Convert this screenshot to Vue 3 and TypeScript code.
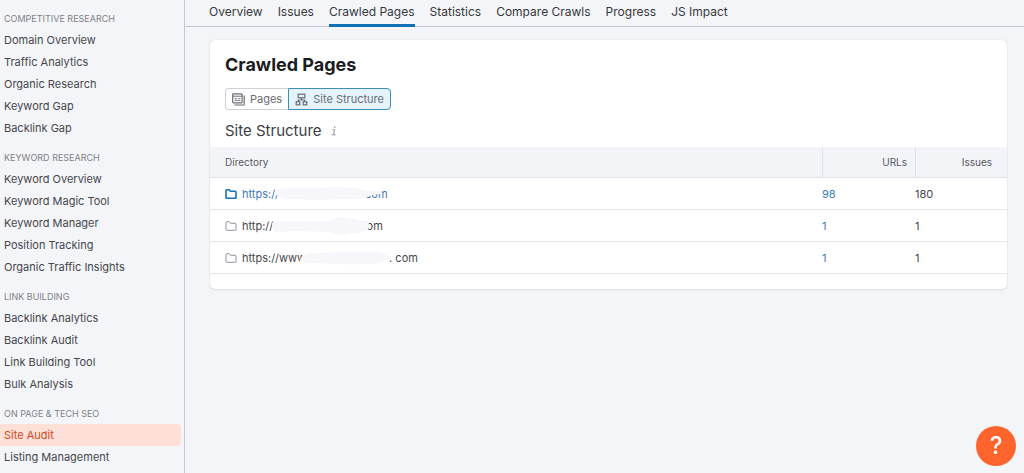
<script setup lang="ts">
interface NavGroup {
  title: string
  items: string[]
}

interface DirectoryRow {
  head: string
  tail: string
  mask: string
  urls: number
  issues: number
  active: boolean
}

const groups: NavGroup[] = [
  {
    title: 'Competitive research',
    items: ['Domain Overview', 'Traffic Analytics', 'Organic Research', 'Keyword Gap', 'Backlink Gap'],
  },
  {
    title: 'Keyword research',
    items: ['Keyword Overview', 'Keyword Magic Tool', 'Keyword Manager', 'Position Tracking', 'Organic Traffic Insights'],
  },
  {
    title: 'Link building',
    items: ['Backlink Analytics', 'Backlink Audit', 'Link Building Tool', 'Bulk Analysis'],
  },
  {
    title: 'On page & tech SEO',
    items: ['Site Audit', 'Listing Management'],
  },
]
const currentTool = 'Site Audit'

const tabs: string[] = ['Overview', 'Issues', 'Crawled Pages', 'Statistics', 'Compare Crawls', 'Progress', 'JS Impact']
const currentTab = 'Crawled Pages'

const rows: DirectoryRow[] = [
  { head: 'https://', tail: 'com', mask: 'short', urls: 98, issues: 180, active: true },
  { head: 'http://', tail: 'com', mask: 'wavy', urls: 1, issues: 1, active: false },
  { head: 'https://www', tail: '. com', mask: 'long', urls: 1, issues: 1, active: false },
]
</script>

<template>
  <div class="app">
    <nav class="sidebar" aria-label="Tools">
      <section v-for="group in groups" :key="group.title" class="group">
        <h2 class="group-title">{{ group.title }}</h2>
        <a
          v-for="item in group.items"
          :key="item"
          href="#"
          class="nav-item"
          :class="{ current: item === currentTool }"
        >{{ item }}</a>
      </section>
    </nav>

    <main class="main">
      <nav class="tabs" aria-label="Site Audit sections">
        <a v-for="tab in tabs" :key="tab" href="#" class="tab" :class="{ current: tab === currentTab }">{{ tab }}</a>
      </nav>

      <section class="card">
        <h1 class="title">Crawled Pages</h1>
        <div class="switch">
          <button type="button" class="pill">
            <svg class="pill-icon" viewBox="0 0 13 13" fill="none" stroke="currentColor" aria-hidden="true">
              <rect x="0.7" y="0.8" width="9.4" height="9" rx="0.8" stroke-width="1.2" />
              <path d="M1 3.2H10" stroke-width="1" />
              <path d="M2.6 5.6H5M6.2 5.6H8.4M2.6 7.4H8.4" stroke-width="0.9" />
              <path d="M12.2 2.4V11.2Q12.2 12 11.4 12H2.4" stroke-width="1.2" />
            </svg>
            <span>Pages</span>
          </button>
          <button type="button" class="pill selected">
            <svg class="pill-icon" viewBox="0 0 13 13" fill="none" stroke="currentColor" stroke-width="1.2" aria-hidden="true">
              <rect x="3.2" y="1.2" width="6.6" height="3.6" />
              <path d="M6.5 4.8V7M3.2 8.8V7H9.8V8.8" />
              <rect x="1.2" y="8.8" width="3.6" height="3" />
              <rect x="8.2" y="8.8" width="3.6" height="3" />
            </svg>
            <span>Site Structure</span>
          </button>
        </div>
        <div class="subhead">
          <h2 class="subtitle">Site Structure</h2>
          <svg class="info" viewBox="0 0 6 10" fill="none" stroke="currentColor" aria-label="Info">
            <path d="M1.4 3.8H3.6L2.6 8.6M0.8 8.8H4.6" stroke-width="1" />
            <circle cx="3.8" cy="1.3" r="0.8" fill="currentColor" stroke="none" />
          </svg>
        </div>

        <table class="table">
          <thead>
            <tr>
              <th scope="col">Directory</th>
              <th scope="col" class="col-num col-urls">URLs</th>
              <th scope="col" class="col-num">Issues</th>
            </tr>
          </thead>
          <tbody>
            <tr v-for="row in rows" :key="row.mask">
              <td>
                <a href="#" class="dir" :class="{ active: row.active }">
                  <svg class="folder" viewBox="0 0 12 12" fill="none" stroke="currentColor" aria-hidden="true">
                    <path
                      d="M1 2.4Q1 1.7 1.7 1.7H4.2L5.6 3.3H10.3Q11 3.3 11 4V9.6Q11 10.3 10.3 10.3H1.7Q1 10.3 1 9.6Z"
                      :stroke-width="row.active ? 1.6 : 1"
                    />
                  </svg>
                  <span>{{ row.head }}</span>
                  <svg v-if="row.mask === 'short'" class="mask short" viewBox="0 0 106 16" aria-hidden="true">
                    <path d="M0 3L10 2Q24 1 40 2Q60 0 80 2L90 5L106 5V8Q94 8 90 12Q74 14 60 13Q40 15 22 13Q8 14 5 11L0 9Z" />
                  </svg>
                  <svg v-else-if="row.mask === 'wavy'" class="mask wavy" viewBox="0 0 98 20" aria-hidden="true">
                    <path d="M0 7Q10 4 22 5L58 5Q66 -1 78 2Q88 5 96 5Q98 9 96 14Q90 17 80 17Q68 21 58 16L22 15Q6 17 1 15Z" />
                  </svg>
                  <svg v-else class="mask long" viewBox="0 0 94 16" aria-hidden="true">
                    <path d="M3 6Q10 2 20 3Q46 1 78 2Q88 4 90 8Q86 13 74 14Q40 15 18 13Q4 14 0 12Z" />
                  </svg>
                  <span>{{ row.tail }}</span>
                </a>
              </td>
              <td class="num"><a href="#" class="count">{{ row.urls }}</a></td>
              <td class="num">{{ row.issues }}</td>
            </tr>
          </tbody>
        </table>
      </section>
    </main>

    <button type="button" class="help" aria-label="Help">?</button>
  </div>
</template>

<style>
body {
  margin: 0;
  background: #f4f5f9;
}
</style>

<style scoped>
.app {
  display: flex;
  min-height: 100vh;
  background: #f4f5f9;
  color: #45474b;
  font-family: Inter, "Liberation Sans", sans-serif;
  font-size: 11px;
}

a {
  color: inherit;
  text-decoration: none;
}

h1,
h2 {
  margin: 0;
}

.sidebar {
  box-sizing: border-box;
  flex: 0 0 185px;
  padding: 8px 3px 0 0;
  border-right: 1px solid #c6c9d0;
}

.group {
  display: flex;
  flex-direction: column;
  margin-bottom: 8px;
}

.group:last-child {
  margin-bottom: 0;
}

.group-title {
  padding-left: 4px;
  color: #7f8187;
  font-size: 9px;
  font-weight: 400;
  line-height: 21px;
  text-transform: uppercase;
}

.nav-item {
  padding-left: 4px;
  border-radius: 0 4px 4px 0;
  line-height: 22px;
}

.nav-item.current {
  background: #ffe0d9;
  color: #cf4a22;
}

.main {
  flex: 1;
  min-width: 0;
}

.tabs {
  display: flex;
  gap: 15px;
  height: 26px;
  padding-left: 24px;
  border-bottom: 1px solid #c6c9d0;
  color: #36383c;
  font-size: 12px;
  line-height: 23px;
}

.tab {
  white-space: nowrap;
}

.tab.current {
  height: 24px;
  border-bottom: 3px solid #1271b5;
}

.card {
  margin: 13px 17px 0 25px;
  padding-bottom: 15px;
  border-radius: 5px;
  background: #fff;
  box-shadow: 0 0 1px 0 #b9bdc8, 0 1px 2px 0 #dfe1e8;
}

.title {
  padding: 13px 15px 0;
  color: #1b1d22;
  font-size: 18px;
  font-weight: 700;
  line-height: 24px;
}

.switch {
  display: flex;
  padding: 11px 15px 0;
}

.pill {
  display: flex;
  align-items: center;
  gap: 5px;
  box-sizing: border-box;
  height: 22px;
  padding: 0 6px;
  border: 1px solid #cfd1d8;
  border-right: 0;
  border-radius: 4px 0 0 4px;
  background: #fff;
  color: #6a6c71;
  font-family: inherit;
  font-size: 11px;
}

.pill.selected {
  border: 1px solid #3d8fb8;
  border-radius: 0 4px 4px 0;
  background: #e5f3fd;
}

.pill-icon {
  width: 13px;
  height: 13px;
}

.subhead {
  display: flex;
  align-items: center;
  gap: 9px;
  height: 37px;
  padding: 5px 15px 0;
  box-sizing: border-box;
}

.subtitle {
  color: #3b3e44;
  font-size: 15px;
  font-weight: 400;
  line-height: 20px;
}

.info {
  width: 6px;
  height: 10px;
  color: #94979f;
}

.table {
  width: 100%;
  table-layout: fixed;
  border-collapse: separate;
  border-spacing: 0;
}

th {
  height: 31px;
  box-sizing: border-box;
  padding: 0 15px;
  border-bottom: 1px solid #dfe1e7;
  background: #f3f4f8;
  color: #56585d;
  font-size: 10px;
  font-weight: 400;
  text-align: left;
}

.col-num {
  width: 92px;
  padding: 0 15px 0 0;
  border-left: 1px solid #dfe1e7;
  text-align: right;
}

.col-urls {
  width: 93px;
  padding-right: 8px;
}

td {
  height: 32px;
  box-sizing: border-box;
  padding: 0 15px;
  border-bottom: 1px solid #e3e5ea;
}

td.num {
  padding: 0;
}

.count {
  color: #3a7dbd;
}

.dir {
  display: flex;
  align-items: center;
}

.dir.active {
  color: #3f78bd;
}

.folder {
  width: 12px;
  height: 12px;
  margin-right: 5px;
  color: #8e9198;
}

.active .folder {
  color: #1673b8;
}

.mask {
  position: relative;
  fill: #f7f7fb;
}

.mask.short {
  width: 106px;
  height: 16px;
  margin: 0 -17px 0 -3px;
}

.mask.wavy {
  width: 98px;
  height: 20px;
  margin: 0 -10px 0 -1px;
}

.mask.long {
  width: 94px;
  height: 16px;
  margin: 0 -4px 0 -7px;
}

.help {
  position: fixed;
  right: 8px;
  bottom: 7px;
  width: 40px;
  height: 40px;
  padding: 0;
  border: 0;
  border-radius: 50%;
  background: #ff642d;
  color: #fff;
  font-family: inherit;
  font-size: 24px;
  font-weight: 500;
  line-height: 40px;
}
</style>
